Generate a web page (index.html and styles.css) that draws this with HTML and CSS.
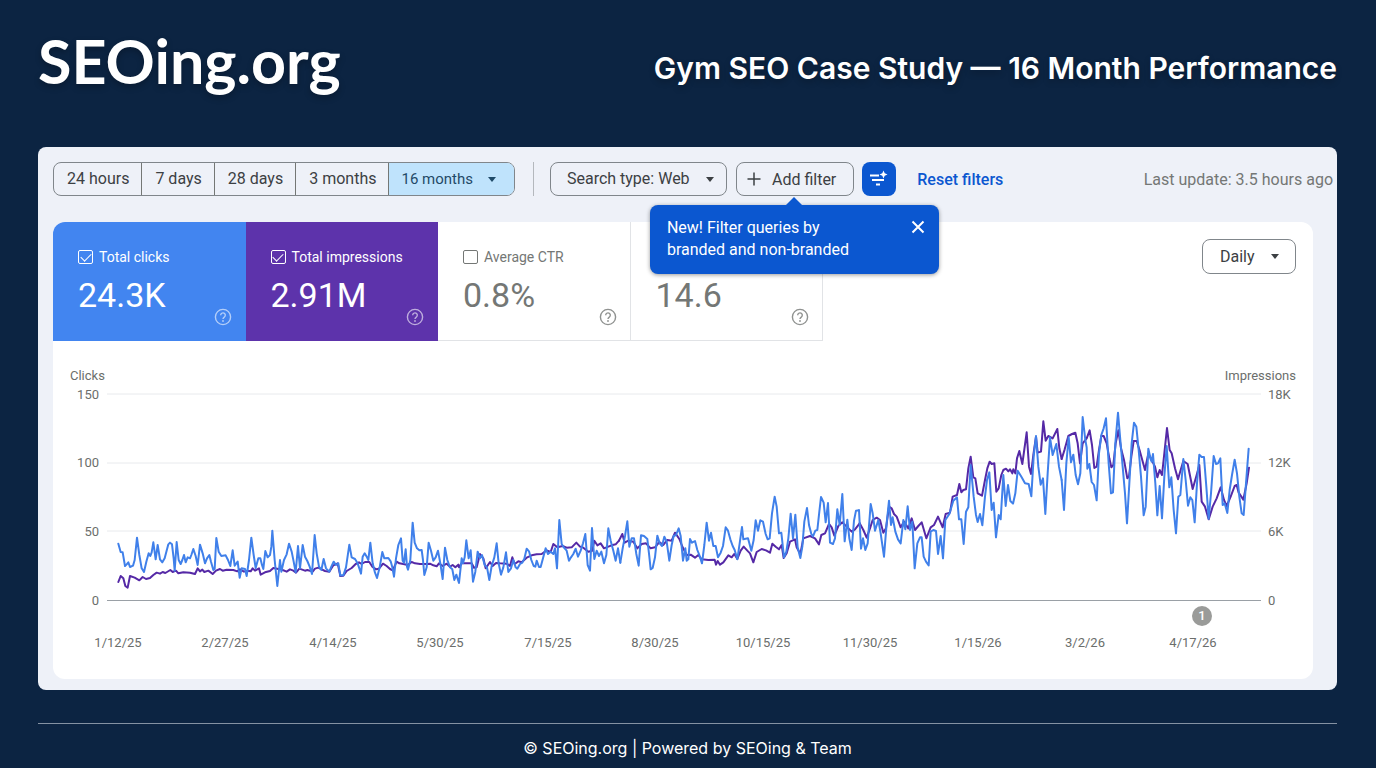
FILE: index.html
```
<!DOCTYPE html>
<html lang="en">
<head>
    <meta charset="UTF-8">
    <meta name="viewport" content="width=device-width, initial-scale=1.0">
    <title>Gym SEO Case Study - SEOing.org</title>
    <link rel="stylesheet" href="styles.css">
</head>
<body>
    <header class="page-header">
        <div class="logo">SEOing.org</div>
        <h1 class="page-title">Gym SEO Case Study — 16 Month Performance</h1>
    </header>

    <main class="panel">
        <div class="toolbar">
            <div class="range-group">
                <button type="button" class="range-btn">24 hours</button>
                <button type="button" class="range-btn">7 days</button>
                <button type="button" class="range-btn">28 days</button>
                <button type="button" class="range-btn">3 months</button>
                <button type="button" class="range-btn active">16 months <span class="caret"></span></button>
            </div>
            <div class="divider"></div>
            <div class="select-wrap">
                <select class="select search-type" aria-label="Search type">
                    <option>Search type: Web</option>
                </select>
                <span class="caret"></span>
            </div>
            <div class="add-filter">
                <button type="button" class="outline-btn">
                    <svg width="14" height="14" viewBox="0 0 14 14"><path d="M7 0.500v13M0.500 7h13"/></svg>
                    Add filter
                </button>
                <div class="tooltip" role="status">
                    <p>New! Filter queries by<br>branded and non-branded</p>
                    <button type="button" class="tooltip-close" aria-label="Close">
                        <svg width="14" height="14" viewBox="0 0 14 14"><path d="M1.500 1.500l11 11M12.500 1.500l-11 11"/></svg>
                    </button>
                </div>
            </div>
            <button type="button" class="smart-btn" aria-label="Smart filter">
                <svg width="20" height="18" viewBox="0 0 20 18">
                    <path class="bars" d="M1 5.500h9M3 10h12M7 14.500h4"/>
                    <path class="spark" d="M14.500 0.500l1.200 2.800 2.800 1.200-2.800 1.200-1.200 2.800-1.200-2.800-2.800-1.200 2.800-1.200z"/>
                </svg>
            </button>
            <a href="#" class="reset-link">Reset filters</a>
            <span class="last-update">Last update: 3.5 hours ago</span>
        </div>

        <section class="card">
            <div class="card-top">
                <div class="metrics">
                    <div class="metric clicks">
                        <label><input type="checkbox" checked>Total clicks</label>
                        <div class="value">24.3K</div>
                        <svg class="help" viewBox="0 0 18 18"><use href="#help"/></svg>
                    </div>
                    <div class="metric impressions">
                        <label><input type="checkbox" checked>Total impressions</label>
                        <div class="value">2.91M</div>
                        <svg class="help" viewBox="0 0 18 18"><use href="#help"/></svg>
                    </div>
                    <div class="metric">
                        <label><input type="checkbox">Average CTR</label>
                        <div class="value">0.8%</div>
                        <svg class="help" viewBox="0 0 18 18"><use href="#help"/></svg>
                    </div>
                    <div class="metric">
                        <label><input type="checkbox" aria-label="Average position"></label>
                        <div class="value">14.6</div>
                        <svg class="help" viewBox="0 0 18 18"><use href="#help"/></svg>
                    </div>
                </div>
                <div class="select-wrap daily">
                    <select class="select" aria-label="Interval">
                        <option>Daily</option>
                    </select>
                    <span class="caret"></span>
                </div>
            </div>

            <svg class="chart" viewBox="0 0 1260 338" role="img" aria-label="Clicks and impressions per day">
                <defs>
                    <symbol id="help" viewBox="0 0 18 18">
                        <circle cx="9" cy="9" r="7.600" fill="none" stroke="currentColor" stroke-width="1.400"/>
                        <path d="M6.700 7.200a2.300 2.300 0 1 1 3.700 1.800c-.8.6-1.400 1-1.400 2" fill="none" stroke="currentColor" stroke-width="1.400"/>
                        <circle cx="9" cy="13" r="0.900" fill="currentColor"/>
                    </symbol>
                </defs>

                <g class="grid">
                    <path d="M54 53H1208M54 122H1208M54 190H1208"/>
                    <path class="base" d="M54 259.500H1208"/>
                </g>

                <g class="axis-title">
                    <text x="17" y="39">Clicks</text>
                    <text x="1243" y="39" text-anchor="end">Impressions</text>
                </g>
                <g class="axis" text-anchor="end">
                    <text x="46" y="58">150</text>
                    <text x="46" y="126">100</text>
                    <text x="46" y="195">50</text>
                    <text x="46" y="264">0</text>
                </g>
                <g class="axis">
                    <text x="1215" y="58">18K</text>
                    <text x="1215" y="126">12K</text>
                    <text x="1215" y="195">6K</text>
                    <text x="1215" y="264">0</text>
                </g>
                <g class="axis" text-anchor="middle">
                    <text x="65" y="306">1/12/25</text>
                    <text x="172" y="306">2/27/25</text>
                    <text x="280" y="306">4/14/25</text>
                    <text x="387" y="306">5/30/25</text>
                    <text x="495" y="306">7/15/25</text>
                    <text x="602" y="306">8/30/25</text>
                    <text x="710" y="306">10/15/25</text>
                    <text x="817" y="306">11/30/25</text>
                    <text x="925" y="306">1/15/26</text>
                    <text x="1032" y="306">3/2/26</text>
                    <text x="1140" y="306">4/17/26</text>
                </g>

                <!-- impressions -->
                <g class="line line-impressions">
                    <polyline transform="translate(7 159) scale(.33333)" points="175,246 182,228 190,235 196,258 203,263 210,228 224,233 238,241 248,231 258,237 270,234 280,225 290,218 300,221 308,216 316,219 331,210 338,216 348,212 355,220 370,217 390,218 405,222 413,205 420,214 427,209 433,216 445,212 458,222 468,212 480,207 488,212 500,209 520,210 532,214 540,208 552,215 562,212 572,214 578,205 585,212 597,205 602,224 615,217 630,213 640,204 655,207 662,207 668,210 680,215 690,208 700,212 708,218 718,206 735,212 742,210 758,215 765,206 775,203 785,208 795,213 808,215 820,196 833,190 841,228"/>
                    <polyline transform="translate(287 139) scale(.33333)" points="1,288 10,287 20,273 35,264 47,252 57,247 65,252 75,246 88,246 97,260 108,268 117,266 129,251 140,258 150,267 158,271 170,245 178,250 190,252 203,255 215,246 225,250 240,252 258,252 270,251 280,256 290,259 297,250 308,258 320,251 330,260 338,255 346,262 355,254 357,262 365,250 380,250 395,250 402,263 410,262 420,222 430,235 437,265 450,246 458,258 468,249 480,250 500,251 510,258 517,232 524,252 535,244 545,247 560,233 575,226 590,223 605,222 620,211 632,216 640,192 652,202 668,198 680,203 695,202 709,188 720,200 730,203 745,215 757,212 763,182 772,196 782,190 792,205 805,200 815,196 827,193 837,182"/>
                    <polyline transform="translate(567 129) scale(.33333)" points="-3,212 7,192 14,218 25,212 40,215 52,235 65,222 78,220 92,235 105,232 118,216 130,225 142,210 155,212 165,188 178,207 188,232 200,255 212,254 225,263 235,255 245,268 265,270 284,269 288,284 293,273 300,284 310,277 325,256 335,262 343,252 352,267 362,242 371,230 382,242 390,250 400,277 410,246 425,237 438,241 450,248 457,221 468,231 477,238 485,225 491,264 500,250 510,215 525,208 530,232 541,252 550,205 570,198 585,205 597,223 604,195 615,190 627,162 635,172 643,197 655,168 667,157 680,170 695,185 705,178 719,160"/>
                    <polyline transform="translate(807 59) scale(.33333)" points="-1,370 10,390 20,413 30,385 38,360 50,353 60,360 70,398 78,385 87,320 95,325 102,342 110,350 122,382 132,365 145,385 155,355 165,390 175,378 185,367 199,415 212,382 222,375 234,350 248,382 257,342 270,338 278,290 291,285 298,252 304,277 310,270 318,268 325,205 332,170 340,232 346,235 353,280 366,287 375,240 382,205 389,185 395,192 403,190 409,275 416,265 424,225 430,210 438,206 445,214 450,208 457,220 460,208 466,220 471,175 478,153 487,192 500,97 507,200 513,222 520,165 528,110 533,158 543,155 550,64 557,122 565,108 578,115 592,87 598,145 605,177"/>
                    <polyline transform="translate(1007 19) scale(.33333)" points="5,297 14,268 25,228 36,222 46,218 53,250 60,310 68,250 80,235 89,211 96,255 103,324 110,320 117,270 124,228 131,228 140,250 148,295 154,322 160,315 167,250 175,211 183,265 192,300 202,355 207,350 214,290 221,243 230,243 240,275 255,330 265,280 275,300 285,320 292,352 299,330 306,345 313,280 321,204 329,270 335,280 345,325 354,358 362,330 370,303 383,312 398,387 410,345 418,315 425,425 435,440 446,478 458,440 470,415 482,382 492,420 500,438 512,410 524,378 530,375 536,398 550,419 560,370 567,323"/>
                </g>

                <!-- clicks -->
                <g class="line line-clicks">
                    <polyline transform="translate(7 159) scale(.33333)" points="175,131 182,156 188,157 195,198 200,193 205,187 210,201 219,197 224,180 231,113 238,165 245,205 252,216 259,185 266,160 271,168 275,157 280,127 287,178 293,135 300,178 307,187 314,175 325,133 330,128 336,133 341,175 344,212 350,126 356,180 362,192 367,180 372,165 377,187 383,172 390,175 394,165 400,147 407,168 413,195 420,134 428,160 435,190 441,175 448,165 453,185 460,210 464,207 469,114 476,155 484,168 497,166 504,180 511,198 518,151 524,197 533,185 539,233 545,205 555,207 560,228 567,180 574,113 581,165 587,204 595,175 601,175 606,195 610,207 616,153 623,172 630,165 634,140 637,92 644,180 652,258 660,180 664,215 672,180 680,163 687,131 695,155 701,185 707,217 714,138 720,205 728,135 735,170 742,183 749,200 756,222 764,105 770,160 777,200 784,210 791,177 798,205 808,215 814,200 821,185 828,195 835,190 841,226"/>
                    <polyline transform="translate(287 139) scale(.33333)" points="1,286 10,286 18,262 28,194 35,232 45,237 52,248 57,262 63,281 68,230 74,220 81,232 85,240 91,188 98,250 105,278 111,294 119,262 127,216 133,235 145,234 152,244 157,262 162,290 168,235 175,195 183,175 188,242 192,248 197,208 201,260 204,269 211,240 218,128 224,188 231,205 238,211 245,210 249,240 253,285 260,262 266,188 273,212 280,242 287,232 294,212 301,250 308,297 315,203 322,240 330,262 337,268 343,300 349,284 357,309 365,235 369,250 374,232 379,181 386,235 392,211 399,305 406,275 413,215 420,235 426,225 434,255 441,262 448,300 455,258 463,232 470,190 476,250 483,284 490,262 498,217 505,276 513,265 520,240 527,262 532,266 540,252 547,248 553,236 560,206 567,214 574,240 581,258 586,260 590,242 597,261 602,261 609,235 617,205 624,222 632,215 640,222 645,205 651,265 658,120 665,192 672,203 680,212 687,242 693,232 700,222 707,206 714,230 722,212 729,190 736,162 743,255 750,272 756,144 763,237 770,212 777,228 784,215 792,250 799,225 805,145 812,182 820,212 827,242 834,205 841,248"/>
                    <polyline transform="translate(567 129) scale(.33333)" points="1,278 8,235 15,198 22,154 28,230 35,205 42,205 49,252 56,287 63,196 72,198 82,207 88,260 92,298 98,294 105,262 112,197 119,220 126,228 133,200 140,215 148,272 155,225 161,198 168,195 176,175 182,198 189,272 196,235 200,272 205,268 210,207 216,218 225,213 232,240 238,255 246,280 253,225 260,158 267,212 273,188 280,228 287,228 294,262 302,248 309,228 317,172 324,182 331,208 338,228 344,240 352,268 359,220 366,171 370,208 384,205 394,242 401,210 407,151 414,182 421,151 429,155 437,192 443,208 449,205 456,130 464,80 470,110 477,190 484,188 492,262 499,245 505,205 512,131 519,205 526,134 533,232 541,264 547,230 553,155 561,114 567,165 574,192 579,199 586,182 592,180 598,125 603,81 611,98 617,157 624,99 630,218 639,222 645,205 652,118 659,165 667,72 674,214 682,149 688,205 695,240 702,152 708,122 717,121"/>
                    <polyline transform="translate(807 59) scale(.33333)" points="-3,331 3,446 9,415 16,450 23,430 32,312 38,340 45,392 55,360 62,400 72,470 80,370 87,302 93,375 98,352 106,395 114,418 122,430 130,360 136,388 143,319 150,390 157,365 164,505 172,430 180,412 185,412 191,470 198,485 206,496 212,395 220,390 228,393 234,462 242,408 249,475 256,360 268,342 280,302 291,292 297,358 304,358 311,432 318,335 325,322 332,195 341,290 348,345 353,366 360,342 367,376 375,290 381,240 388,217 395,330 401,308 408,412 416,345 422,358 430,225 437,318 444,255 451,303 459,311 466,280 473,212 485,232 495,250 506,252 514,289 521,170 528,108 535,200 542,254 549,235 556,342 563,220 570,112 578,165 589,132 597,200 605,240"/>
                    <polyline transform="translate(1007 19) scale(.33333)" points="5,360 12,450 19,310 26,232 33,307 40,284 47,345 54,373 61,340 68,171 76,240 80,262 82,326 88,312 95,366 102,375 110,421 117,280 124,225 131,205 138,175 146,310 153,400 159,397 166,250 174,158 181,240 188,320 195,400 201,490 208,370 215,250 222,188 229,200 236,270 243,350 251,466 257,440 265,266 272,298 275,305 279,282 286,370 292,466 299,378 306,475 313,350 320,258 328,382 334,352 341,450 348,520 355,410 361,405 370,297 377,360 384,437 391,412 397,420 404,487 411,370 418,284 425,291 432,291 439,380 446,476 453,400 461,288 468,312 474,310 481,295 488,435 494,430 502,459 509,390 516,345 524,299 531,340 538,410 545,460 551,465 558,370 566,266"/>
                </g>

                <g class="marker">
                    <circle cx="1149" cy="275" r="10"/>
                    <text x="1149" y="279" text-anchor="middle">1</text>
                </g>
            </svg>
        </section>
    </main>

    <footer class="page-footer">© SEOing.org | Powered by SEOing &amp; Team</footer>
</body>
</html>
```
FILE: styles.css
```
* {
    margin: 0;
    padding: 0;
    box-sizing: border-box;
}

body {
    font-family: Roboto, "Liberation Sans", sans-serif;
    background: #0c2442;
    color: #3c4043;
    min-height: 100vh;
    padding: 0 39px 0 38px;
}

button,
select {
    font: inherit;
    color: inherit;
    background: none;
    border: none;
    cursor: pointer;
}

.page-header {
    display: flex;
    align-items: center;
    justify-content: space-between;
    height: 147px;
    padding-bottom: 12px;
    color: white;
    text-shadow: 0 3px 6px rgba(0, 0, 0, 0.25);
}

.logo {
    padding-bottom: 14px;
    font-family: Lato, sans-serif;
    font-size: 61px;
    font-weight: 700;
    line-height: 72px;
}

.page-title {
    font-family: Inter, sans-serif;
    font-size: 30px;
    font-weight: 600;
}

.panel {
    background: #eef1f8;
    border-radius: 8px;
    padding: 15px 24px 11px 15px;
}

/* Toolbar */
.toolbar {
    display: flex;
    align-items: center;
    height: 34px;
    margin: 0 -20px 26px 0;
    font-size: 16px;
    white-space: nowrap;
}

.range-group {
    display: flex;
    height: 34px;
    border: 1px solid #80868b;
    border-radius: 8px;
    overflow: hidden;
}

.range-btn {
    padding: 0 12px 2px 13px;
    border-right: 1px solid #747775;
}

.range-btn.active {
    display: flex;
    align-items: center;
    gap: 15px;
    padding: 0 18px 0 12px;
    border-right: none;
    background: #bfe3fc;
    color: #1f4a68;
    font-size: 15px;
}

.caret {
    border: 4px solid transparent;
    border-top: 5px solid currentColor;
    border-bottom: none;
}

.divider {
    width: 1px;
    height: 34px;
    margin: 0 16px 0 18px;
    background: #b4b8bd;
}

.select-wrap {
    display: grid;
    align-items: center;
}

.select-wrap > * {
    grid-area: 1 / 1;
}

.select-wrap .caret {
    justify-self: end;
    margin-right: 13px;
    pointer-events: none;
}

.select {
    appearance: none;
    height: 34px;
    padding: 0 36px 2px 16px;
    border: 1px solid #80868b;
    border-radius: 8px;
}

.add-filter {
    position: relative;
    margin: 0 8px 0 9px;
}

.outline-btn {
    display: flex;
    align-items: center;
    gap: 11px;
    height: 34px;
    padding: 0 17px 0 10px;
    border: 1px solid #80868b;
    border-radius: 8px;
}

.outline-btn svg,
.tooltip-close svg {
    display: block;
    fill: none;
    stroke: currentColor;
    stroke-width: 1.5;
}

.smart-btn {
    display: grid;
    place-items: center;
    width: 34px;
    height: 34px;
    border-radius: 8px;
    background: #0b57d0;
}

.smart-btn .bars {
    stroke: white;
    stroke-width: 1.8;
}

.smart-btn .spark {
    fill: white;
}

.reset-link {
    margin-left: 21px;
    color: #0b57d0;
    font-weight: 500;
    text-decoration: none;
}

.last-update {
    margin-left: auto;
    color: #747775;
}

.tooltip {
    position: absolute;
    top: 43px;
    left: -86px;
    z-index: 2;
    display: flex;
    justify-content: space-between;
    align-items: flex-start;
    width: 289px;
    height: 69px;
    padding: 12px 14px 0 17px;
    border-radius: 8px;
    background: #0b57d0;
    color: white;
    font-size: 16px;
    line-height: 22px;
    box-shadow: 0 1px 4px rgba(0, 0, 0, 0.4);
}

.tooltip::before {
    content: "";
    position: absolute;
    bottom: 100%;
    left: 136px;
    border: 8px solid transparent;
    border-bottom-color: #0b57d0;
    border-top: none;
}

.tooltip-close {
    margin-top: 3px;
}

.tooltip-close svg {
    stroke-width: 2;
}

/* Card */
.card {
    background: white;
    border-radius: 12px;
    overflow: hidden;
}

.card-top {
    display: flex;
    justify-content: space-between;
    align-items: flex-start;
}

.metrics {
    display: grid;
    grid-template-columns: repeat(4, 1fr);
    width: 770px;
}

.metric {
    position: relative;
    height: 119px;
    padding: 24px 0 0 25px;
    color: #747775;
    border-right: 1px solid #e1e3e6;
    border-bottom: 1px solid #e1e3e6;
}

.metric.clicks {
    background: #4285f0;
    border-color: #4285f0;
    color: white;
}

.metric.impressions {
    background: #5d33ab;
    border-color: #5d33ab;
    color: white;
}

.metric label {
    display: flex;
    align-items: center;
    gap: 6px;
    height: 22px;
    font-size: 14px;
    line-height: 22px;
}

.metric input {
    appearance: none;
    display: grid;
    place-items: center;
    width: 15px;
    height: 14px;
    border: 1px solid;
    border-radius: 2px;
    color: inherit;
}

.metric input:checked::before {
    content: "";
    width: 9px;
    height: 5px;
    border-left: 1px solid white;
    border-bottom: 1px solid white;
    transform: translateY(-1px) rotate(-45deg);
}

.metric .value {
    margin-top: 6px;
    font-size: 34px;
    line-height: 42px;
}

.help {
    position: absolute;
    right: 13px;
    bottom: 14px;
    width: 18px;
    height: 18px;
    opacity: 0.8;
}

.clicks .help,
.impressions .help {
    opacity: 0.6;
}

.daily {
    margin: 17px 17px 0 0;
}

.daily .select {
    width: 94px;
    height: 35px;
    padding: 0 17px;
}

.daily .caret {
    margin-right: 17px;
}

/* Chart */
.chart {
    display: block;
    width: 100%;
}

.grid path {
    stroke: #e8eaed;
}

.grid .base {
    stroke: #9aa0a6;
}

.chart text {
    fill: #6b6e6c;
    font-size: 13px;
}

.line polyline {
    fill: none;
    stroke-width: 2;
    stroke-linejoin: round;
    stroke-linecap: round;
    vector-effect: non-scaling-stroke;
}

.line-impressions {
    stroke: #5529a6;
}

.line-clicks {
    stroke: #4080ea;
}

.marker circle {
    fill: #9a9b99;
}

.chart .marker text {
    fill: white;
    font-weight: 500;
}

.page-footer {
    margin-top: 33px;
    padding-top: 12px;
    border-top: 1px solid #8592a3;
    color: white;
    font-family: Inter, sans-serif;
    font-size: 16px;
    line-height: 24px;
    text-align: center;
}
```
